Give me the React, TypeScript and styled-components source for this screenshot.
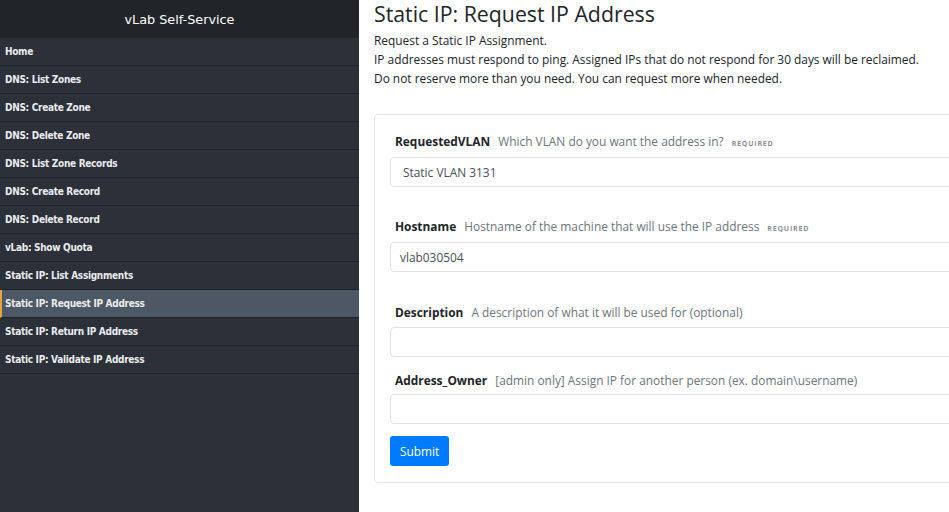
import React from "react";
import styled, { createGlobalStyle } from "styled-components";

const Global = createGlobalStyle`
  html, body { margin: 0; padding: 0; background: #fff; overflow: hidden; }
  body { width: 949px; height: 512px; }
  * { box-sizing: border-box; }
`;

const Layout = styled.div`
  display: flex;
  width: 949px;
  height: 512px;
  overflow: hidden;
`;

const Sidebar = styled.nav`
  flex: 0 0 359px;
  background: #2c3038;
  display: flex;
  flex-direction: column;
`;

const Brand = styled.div`
  height: 38px;
  background: #212529;
  color: #ffffff;
  font-family: "DejaVu Sans", Verdana, sans-serif;
  font-size: 12.8px;
  display: flex;
  align-items: center;
  justify-content: center;
`;

const NavItem = styled.div<{ $active?: boolean }>`
  height: 28px;
  display: flex;
  align-items: center;
  padding-left: ${(p) => (p.$active ? "3px" : "5px")};
  border-left: ${(p) => (p.$active ? "2px solid #e8a33d" : "none")};
  border-bottom: 1px solid #1f2327;
  background: ${(p) => (p.$active ? "#4e5864" : "transparent")};
  color: #e9ecef;
  font-family: Tahoma, "DejaVu Sans Condensed", "DejaVu Sans", sans-serif;
  font-weight: 700;
  font-size: 10px;
  letter-spacing: -0.3px;
`;

const Main = styled.main`
  flex: 1 0 auto;
  padding: 0 0 0 15px;
  font-family: "Segoe UI", "Open Sans", sans-serif;
  color: #212529;
  min-width: 0;
`;

const Title = styled.h1`
  margin: 0;
  font-size: 21.3px;
  font-weight: 500;
  line-height: 27px;
  color: #212529;
`;

const Intro = styled.div`
  margin-top: 4px;
  font-size: 11.9px;
  line-height: 19px;
`;

const Card = styled.section`
  margin-top: 26px;
  width: 640px;
  border: 1px solid #e3e6ea;
  border-radius: 4px;
  padding: 17px 0 16px 15px;
`;

const Field = styled.div<{ $gap: number }>`
  margin-bottom: ${(p) => p.$gap}px;
`;

const LabelRow = styled.div<{ $space?: number }>`
  padding-left: 5px;
  font-size: 11.9px;
  line-height: 18px;
  margin-bottom: ${(p) => p.$space ?? 4}px;
  display: flex;
  align-items: baseline;
  white-space: nowrap;
`;

const LabelName = styled.span`
  font-weight: 700;
  color: #212529;
  margin-right: 8px;
`;

const Help = styled.span`
  color: #6c757d;
`;

const Required = styled.span`
  margin-left: 8px;
  font-size: 7px;
  font-weight: 700;
  letter-spacing: 0.8px;
  color: #8a9096;
  text-transform: uppercase;
`;

const Input = styled.div<{ $pad?: number }>`
  height: 30px;
  border: 1px solid #dfe3e8;
  border-radius: 4px;
  display: flex;
  align-items: center;
  padding-left: ${(p) => p.$pad ?? 12}px;
  font-size: 11.9px;
  color: #495057;
`;

const Submit = styled.button`
  height: 30px;
  padding: 0 10px;
  background: #007bff;
  color: #fff;
  border: none;
  border-radius: 3px;
  font-family: "Segoe UI", "Open Sans", sans-serif;
  font-size: 11.9px;
`;

const navItems = [
  "Home",
  "DNS: List Zones",
  "DNS: Create Zone",
  "DNS: Delete Zone",
  "DNS: List Zone Records",
  "DNS: Create Record",
  "DNS: Delete Record",
  "vLab: Show Quota",
  "Static IP: List Assignments",
  "Static IP: Request IP Address",
  "Static IP: Return IP Address",
  "Static IP: Validate IP Address",
];

export default function App() {
  return (
    <>
      <Global />
      <Layout>
        <Sidebar>
          <Brand>vLab Self-Service</Brand>
          {navItems.map((n) => (
            <NavItem key={n} $active={n === "Static IP: Request IP Address"}>
              {n}
            </NavItem>
          ))}
        </Sidebar>
        <Main>
          <Title>Static IP: Request IP Address</Title>
          <Intro>
            Request a Static IP Assignment.
            <br />
            IP addresses must respond to ping. Assigned IPs that do not respond for 30 days will be reclaimed.
            <br />
            Do not reserve more than you need. You can request more when needed.
          </Intro>
          <Card>
            <Field $gap={30}>
              <LabelRow>
                <LabelName>RequestedVLAN</LabelName>
                <Help>Which VLAN do you want the address in?</Help>
                <Required>Required</Required>
              </LabelRow>
              <Input>Static VLAN 3131</Input>
            </Field>
            <Field $gap={31}>
              <LabelRow>
                <LabelName>Hostname</LabelName>
                <Help>Hostname of the machine that will use the IP address</Help>
                <Required>Required</Required>
              </LabelRow>
              <Input $pad={9}>vlab030504</Input>
            </Field>
            <Field $gap={14}>
              <LabelRow $space={6}>
                <LabelName>Description</LabelName>
                <Help>A description of what it will be used for (optional)</Help>
              </LabelRow>
              <Input />
            </Field>
            <Field $gap={12}>
              <LabelRow $space={5}>
                <LabelName>Address_Owner</LabelName>
                <Help>[admin only] Assign IP for another person (ex. domain\username)</Help>
              </LabelRow>
              <Input />
            </Field>
            <Submit>Submit</Submit>
          </Card>
        </Main>
      </Layout>
    </>
  );
}
